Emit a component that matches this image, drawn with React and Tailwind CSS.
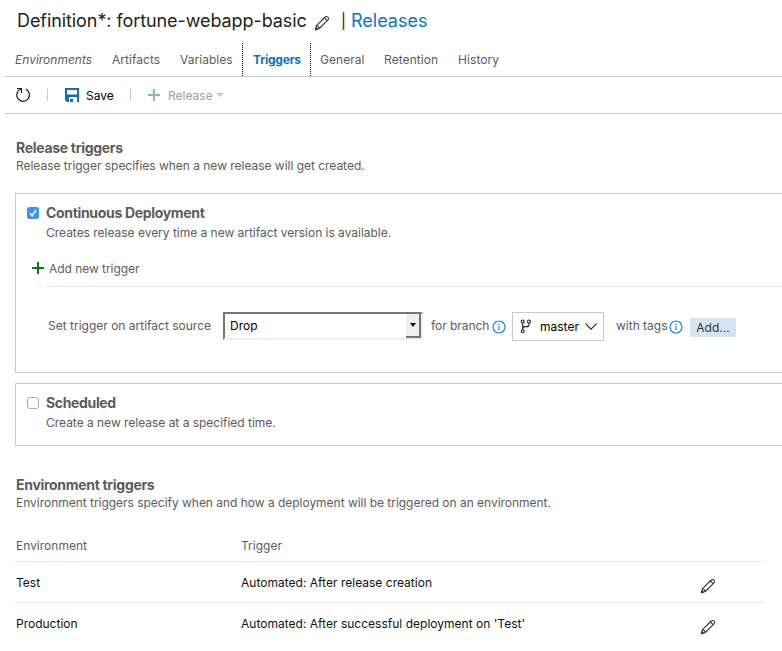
import React from "react";

function Pencil({ className = "" }) {
  return (
    <svg width="16" height="16" viewBox="0 0 16 16" fill="none" stroke="#333" strokeWidth="1.1" strokeLinejoin="round" className={"shrink-0 " + className}>
      <path d="M1.4 14.6 2.5 10.7 11.2 2 Q12.6.9 14 2.1 Q15.2 3.5 14 4.9 L5.3 13.5 Z" />
      <path d="M2.5 10.7 Q4.7 11.2 5.3 13.5 M10.4 2.9 13.1 5.7" />
      <path d="M1.4 14.6 1.9 12.7 3.3 14.1Z" fill="#333" />
    </svg>
  );
}

function Info({ className = "" }) {
  return (
    <svg width="14" height="14" viewBox="0 0 14 14" className={"shrink-0 " + className}>
      <circle cx="7" cy="7" r="6" fill="none" stroke="#1b86d8" strokeWidth="1.2" />
      <path d="M7 6v4.3M7 3.6v1.3" stroke="#1b86d8" strokeWidth="1.2" />
    </svg>
  );
}

function Plus({ color, className = "", size = 12 }) {
  return (
    <svg width={size} height={size} viewBox="0 0 12 12" className={"shrink-0 " + className}>
      <path d="M6 0v12M0 6h12" stroke={color} strokeWidth="2" />
    </svg>
  );
}

function Header() {
  return (
    <header className="flex h-[43px] items-center pl-[17px] text-[18px] leading-[22px] text-[#222]">
      <h1 className="w-[297px] shrink-0 pb-[2px] tracking-[-0.08px]">Definition*: fortune-webapp-basic</h1>
      <Pencil className="mt-[3px]" />
      <span className="ml-[11px] w-[10px] pb-[2px] text-[15px]">|</span>
      <a className="pb-[2px] text-[#0b74cd]">Releases</a>
    </header>
  );
}

function Tabs() {
  return (
    <nav className="ml-[5px] flex h-[34px] border-b border-[#c8c8c8] text-[12px] leading-[33px]">
      <span className="w-[97px] shrink-0 pl-[10px] italic">Environments</span>
      <span className="w-[68px] shrink-0 pl-[10px] tracking-[0.04px]">Artifacts</span>
      <span className="w-[72px] shrink-0 pl-[10px] tracking-[0.04px]">Variables</span>
      <span className="w-[69px] shrink-0 border-x border-dotted border-black pl-[10px] font-bold tracking-[-0.2px] text-[#106ebe]">Triggers</span>
      <span className="w-[68px] shrink-0 pl-[9px] tracking-[0.04px]">General</span>
      <span className="w-[74px] shrink-0 pl-[5px] tracking-[0.08px]">Retention</span>
      <span className="pl-[5px] tracking-[0.08px]">History</span>
    </nav>
  );
}

function Toolbar() {
  return (
    <div className="ml-[5px] flex h-[37px] items-center border-b border-[#c8c8c8] pl-[10px] text-[12px]">
      <svg width="16" height="16" viewBox="0 0 16 16" fill="none" stroke="#222" strokeWidth="1.2" className="shrink-0">
        <path d="M2 1.5h4.5V6M6.2 1.8A6.4 6.4 0 1 0 10.8 2.1" />
      </svg>
      <i className="ml-[16px] h-[12px] w-px bg-[#c8c8c8]" />
      <svg width="14" height="14" viewBox="0 0 14 14" className="ml-[17px] shrink-0">
        <path fill="#106ebe" fillRule="evenodd" d="M0 0h14v14h-2V9H4v5H2L0 12ZM2 2v4.5h10V2Z" />
        <path fill="#106ebe" d="M5 11h3v3H5Z" />
      </svg>
      <span className="mt-[2px] ml-[7px] w-[44px] text-black">Save</span>
      <i className="h-[12px] w-px bg-[#c8c8c8]" />
      <Plus color="#86c08b" className="ml-[17px]" />
      <span className="mt-[2px] ml-[8px] w-[48px] text-[#a0a0a0]">Release</span>
      <svg width="8" height="4" viewBox="0 0 8 4"><path d="M0 0h8L4 4Z" fill="#c8c8c8" /></svg>
    </div>
  );
}

function Check({ checked }) {
  return checked ? (
    <svg width="12" height="12" viewBox="0 0 12 12" className="shrink-0">
      <rect width="12" height="12" rx="2.5" fill="#3b93f7" />
      <path d="M3 6.4 5.1 8.7 9 3.1" fill="none" stroke="#fff" strokeWidth="1.6" />
    </svg>
  ) : (
    <svg width="12" height="12" viewBox="0 0 12 12" className="shrink-0">
      <rect x=".5" y=".5" width="11" height="11" rx="2.2" fill="#fff" stroke="#aaa" />
    </svg>
  );
}

function Heading({ title, children }) {
  return (
    <div className="pl-[16px]">
      <h2 className="text-[14px] leading-[20px] font-bold tracking-[-0.3px]">{title}</h2>
      <p className="leading-[16px] tracking-[-0.025px]">{children}</p>
    </div>
  );
}

function ContinuousDeployment() {
  return (
    <section className="ml-[15px] h-[180px] border border-r-0 border-[#c8c8c8] pt-[9px] pl-[11px]">
      <div className="flex h-[20px] items-center">
        <Check checked />
        <h3 className="ml-[7px] text-[14px] leading-[20px] font-bold tracking-[-0.32px]">Continuous Deployment</h3>
      </div>
      <p className="pl-[19px] leading-[20px] tracking-[-0.02px]">Creates release every time a new artifact version is available.</p>
      <div className="mt-[15px] flex h-[20px] items-center pl-[5px]">
        <Plus color="#107c10" />
        <span className="mt-[2px] ml-[5px] tracking-[-0.05px]">Add new trigger</span>
      </div>
      <div className="mt-[8px] ml-[19px] h-px bg-[#eaeaea]" />
      <div className="mt-[24px] flex h-[30px] items-center pl-[21px]">
        <span className="w-[175px] shrink-0 pb-px">Set trigger on artifact source</span>
        <div className="flex h-[28px] w-[200px] shrink-0 justify-between border-2 border-[#767676] border-r-[#eee] border-b-[#eee] bg-white">
          <span className="pl-[5px] leading-[24px] text-black">Drop</span>
          <div className="flex h-[24px] w-[15px] items-center justify-center border-r-2 border-b-2 border-[#767676] bg-[#f0f0f0]">
            <svg width="6" height="4" viewBox="0 0 6 4"><path d="M0 0h6L3 4Z" fill="#000" /></svg>
          </div>
        </div>
        <span className="ml-[8px] w-[61px] shrink-0 pb-px tracking-[-0.05px]">for branch</span>
        <Info className="mt-[2px]" />
        <div className="ml-[6px] flex h-[29px] w-[92px] shrink-0 items-center border border-[#c8c8c8] pl-[7px] text-black">
          <svg width="13" height="15" viewBox="0 0 13 15" fill="none" stroke="#222" strokeWidth="1.1" className="shrink-0">
            <circle cx="2.7" cy="2.5" r="1.5" /><circle cx="9" cy="2.5" r="1.5" /><circle cx="2.7" cy="12.3" r="1.5" />
            <path d="M2.7 4v6.8M9 4v1.6Q9 7.6 7 7.6H5Q2.7 7.6 2.7 9.8" />
          </svg>
          <span className="mt-px ml-[7px] w-[45px]">master</span>
          <svg width="12" height="7" viewBox="0 0 12 7" fill="none" stroke="#222" strokeWidth="1.2"><path d="m.5.6 5.5 5.5L11.5.6" /></svg>
        </div>
        <span className="ml-[12px] w-[53px] shrink-0 pb-px">with tags</span>
        <Info className="mt-[2px]" />
        <button className="ml-[7px] mt-[2px] h-[19px] w-[46px] bg-[#d5e5f2] text-center leading-[19px] text-[#333]">Add...</button>
      </div>
    </section>
  );
}

function Scheduled() {
  return (
    <section className="mt-[10px] ml-[15px] h-[63px] border border-r-0 border-[#c8c8c8] pt-[9px] pl-[11px]">
      <div className="flex h-[20px] items-center">
        <Check />
        <h3 className="ml-[7px] text-[14px] leading-[20px] font-bold tracking-[-0.35px]">Scheduled</h3>
      </div>
      <p className="pl-[19px] leading-[20px] tracking-[-0.02px]">Create a new release at a specified time.</p>
    </section>
  );
}

function EnvironmentRow({ name, trigger, className = "" }) {
  return (
    <div className={"ml-[15px] flex h-[41px] w-[750px] items-center pl-[1px] text-[#111] " + className}>
      <span className="w-[225px] shrink-0">{name}</span>
      <span className="w-[459px] shrink-0 tracking-[0.015px]">{trigger}</span>
      <Pencil className="mt-[7px]" />
    </div>
  );
}

export default function App() {
  return (
    <main className="h-[651px] w-[782px] overflow-hidden bg-white font-['Inter','Liberation_Sans',sans-serif] text-[12px] text-[#5c5c5c]">
      <Header />
      <Tabs />
      <Toolbar />
      <div className="h-[24px]" />
      <Heading title="Release triggers">Release trigger specifies when a new release will get created.</Heading>
      <div className="h-[19px]" />
      <ContinuousDeployment />
      <Scheduled />
      <div className="h-[29px]" />
      <Heading title="Environment triggers">Environment triggers specify when and how a deployment will be triggered on an environment.</Heading>
      <div className="mt-[19px] ml-[15px] flex h-[32px] w-[750px] items-center border-b border-[#eaeaea] pl-[1px]">
        <span className="w-[225px]">Environment</span>
        <span>Trigger</span>
      </div>
      <EnvironmentRow name="Test" trigger="Automated: After release creation" className="border-b border-[#eaeaea] pt-px" />
      <EnvironmentRow name="Production" trigger="Automated: After successful deployment on 'Test'" />
    </main>
  );
}
